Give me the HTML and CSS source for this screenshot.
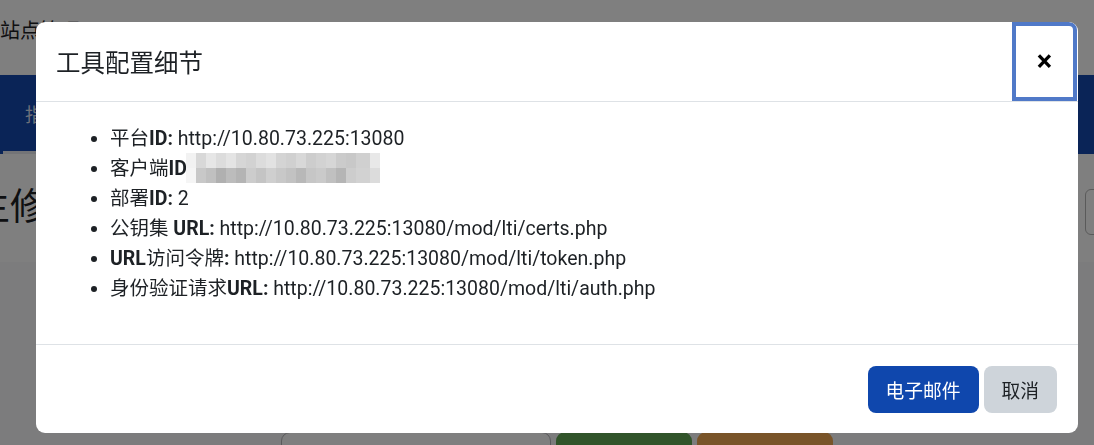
FILE: index.html
```html
<!DOCTYPE html>
<html lang="zh">
<head>
<meta charset="utf-8">
<title>工具配置细节</title>
<link rel="stylesheet" href="styles.css">
</head>
<body>
<div class="page">
  <header class="topbar">
    <span class="site-name">站点管理</span>
  </header>
  <nav class="navbar">
    <a class="nav-item active">指南</a>
  </nav>
  <section class="page-header">
    <h1 class="page-title">主修改工具</h1>
    <div class="search-box"></div>
  </section>
  <main class="main">
    <div class="action-row">
      <span class="btn-ghost"></span>
      <span class="btn-green"></span>
      <span class="btn-orange"></span>
    </div>
  </main>
</div>

<div class="backdrop"></div>

<div class="modal" role="dialog">
  <div class="modal-header">
    <h5 class="modal-title">工具配置细节</h5>
    <button class="close-btn" aria-label="关闭">×</button>
  </div>
  <div class="modal-body">
    <ul class="details">
      <li><b><span class="cjk">平台</span>ID:</b> http://10.80.73.225:13080</li>
      <li><b><span class="cjk">客户端</span>ID</b> <span class="blurred"></span></li>
      <li><b><span class="cjk">部署</span>ID:</b> 2</li>
      <li><b><span class="cjk">公钥集</span> URL:</b> http://10.80.73.225:13080/mod/lti/certs.php</li>
      <li><b>URL<span class="cjk">访问令牌</span>:</b> http://10.80.73.225:13080/mod/lti/token.php</li>
      <li><b><span class="cjk">身份验证请求</span>URL:</b> http://10.80.73.225:13080/mod/lti/auth.php</li>
    </ul>
  </div>
  <div class="modal-footer">
    <button class="btn btn-primary">电子邮件</button>
    <button class="btn btn-secondary">取消</button>
  </div>
</div>
</body>
</html>
```

FILE: styles.css
```css
html, body {
  margin: 0;
  padding: 0;
  height: 100%;
  overflow: hidden;
}
body {
  font-family: Roboto, "Noto Sans CJK SC", sans-serif;
  color: #1d2125;
  background: #f8f9fa;
}
.page {
  display: flex;
  flex-direction: column;
  width: 1094px;
  height: 445px;
  overflow: hidden;
}
.topbar {
  height: 75px;
  background: #ffffff;
  display: flex;
  align-items: center;
  flex: none;
}
.site-name {
  font-size: 20px;
  line-height: 24px;
  margin-top: -14px;
  color: #1d2125;
}
.navbar {
  height: 79px;
  flex: none;
  background: #1548ae;
  display: flex;
  align-items: stretch;
  box-shadow: 0 3px 4px rgba(0,0,0,0.35);
}
.nav-item {
  display: flex;
  align-items: center;
  margin-left: 3px;
  padding: 0 22px;
  font-size: 18.75px;
  color: rgba(255,255,255,0.85);
  border-bottom: 3px solid #e6e9ef;
}
.page-header {
  height: 108px;
  flex: none;
  background: #ffffff;
  display: flex;
  align-items: center;
  justify-content: space-between;
}
.page-title {
  margin: 0 0 0 -27px;
  font-size: 37px;
  font-weight: 400;
  line-height: 44px;
  color: #1d2125;
}
.search-box {
  width: 40px;
  height: 46px;
  margin-right: -31px;
  margin-top: 8px;
  border: 1px solid #b5b5b5;
  border-radius: 6px;
  box-sizing: border-box;
}
.main {
  flex: 1;
  background: #f8f9fa;
  padding: 170px 0 0 281px;
}
.action-row {
  display: flex;
  gap: 5px;
}
.action-row span {
  display: block;
  height: 40px;
  border-radius: 9px;
}
.btn-ghost {
  width: 268px;
  border: 1px solid #b4b4b8;
  background: #ffffff;
}
.btn-green { width: 136px; background: #62a854; }
.btn-orange { width: 136px; background: #f2a852; }

.backdrop {
  position: fixed;
  inset: 0;
  z-index: 10;
  background: rgba(0,0,0,0.5);
}

.modal {
  position: absolute;
  z-index: 20;
  top: 22px;
  left: 36px;
  width: 1042px;
  height: 411px;
  background: #ffffff;
  border-radius: 9px;
  display: flex;
  flex-direction: column;
  overflow: hidden;
}
.modal-header {
  height: 79px;
  border-bottom: 1px solid #dee2e6;
  display: flex;
  align-items: center;
  justify-content: space-between;
  padding-left: 20px;
  flex: none;
}
.modal-title {
  margin: 0;
  font-family: "Noto Sans CJK SC", Roboto, sans-serif;
  font-size: 24.5px;
  font-weight: 400;
  line-height: 28px;
  color: #1d2125;
}
.close-btn {
  align-self: flex-start;
  width: 65px;
  height: 79px;
  margin-right: 1px;
  box-sizing: border-box;
  border: 4px solid #5079c8;
  background: #ffffff;
  border-top-right-radius: 8px;
  font-family: Roboto, sans-serif;
  font-size: 29px;
  font-weight: 700;
  color: #000000;
  padding: 0;
  line-height: 1;
  cursor: pointer;
}
.modal-body {
  flex: 1;
  padding: 22px 20px 0 20px;
}
.details {
  margin: 0;
  padding-left: 54px;
  font-size: 19.5px;
  line-height: 30px;
}
.details b {
  font-weight: 700;
}
.details .cjk {
  font-weight: 400;
}
.blurred {
  display: inline-block;
  vertical-align: middle;
  width: 194px;
  height: 30px;
  margin-left: -6px;
  margin-top: -4px;
  background:
    linear-gradient(to right,
      #f2f2f2 0 10px, #d8d8d8 10px 20px, #e6e6e6 20px 30px, #dcdcdc 30px 40px,
      #e4e4e4 40px 50px, #d6d6d6 50px 60px, #d2d2d2 60px 70px, #dcdcdc 70px 80px,
      #e2e2e2 80px 90px, #d4d4d4 90px 100px, #d0d0d0 100px 110px, #d8d8d8 110px 120px,
      #cdcdcd 120px 130px, #d2d2d2 130px 140px, #d6d6d6 140px 150px, #cbcbcb 150px 160px,
      #c8c8c8 160px 170px, #d0d0d0 170px 184px, #e8e8e8 184px 194px) top / 100% 15px no-repeat,
    linear-gradient(to right,
      #f5f5f5 0 10px, #c8c8c8 10px 20px, #c0c0c0 20px 30px, #b0b0b0 30px 40px,
      #bcbcbc 40px 50px, #b4b4b4 50px 60px, #cccccc 60px 70px, #c4c4c4 70px 80px,
      #cfcfcf 80px 90px, #c8c8c8 90px 100px, #c2c2c2 100px 110px, #b8b8b8 110px 120px,
      #c6c6c6 120px 130px, #cacaca 130px 140px, #c0c0c0 140px 150px, #b5b5b5 150px 160px,
      #cdcdcd 160px 170px, #d2d2d2 170px 184px, #dcdcdc 184px 194px) 0 15px / 100% 15px no-repeat;
}
.modal-footer {
  flex: none;
  border-top: 1px solid #dee2e6;
  display: flex;
  justify-content: flex-end;
  gap: 5px;
  padding: 21px 21px 20px 20px;
}
.btn {
  font-family: "Noto Sans CJK SC", Roboto, sans-serif;
  font-size: 18.75px;
  line-height: 28px;
  padding: 9.5px 18px;
  border: none;
  border-radius: 8px;
  cursor: pointer;
}
.btn-primary {
  background: #0f47ad;
  color: #ffffff;
}
.btn-secondary {
  background: #ced4da;
  color: #1d2125;
}
```
